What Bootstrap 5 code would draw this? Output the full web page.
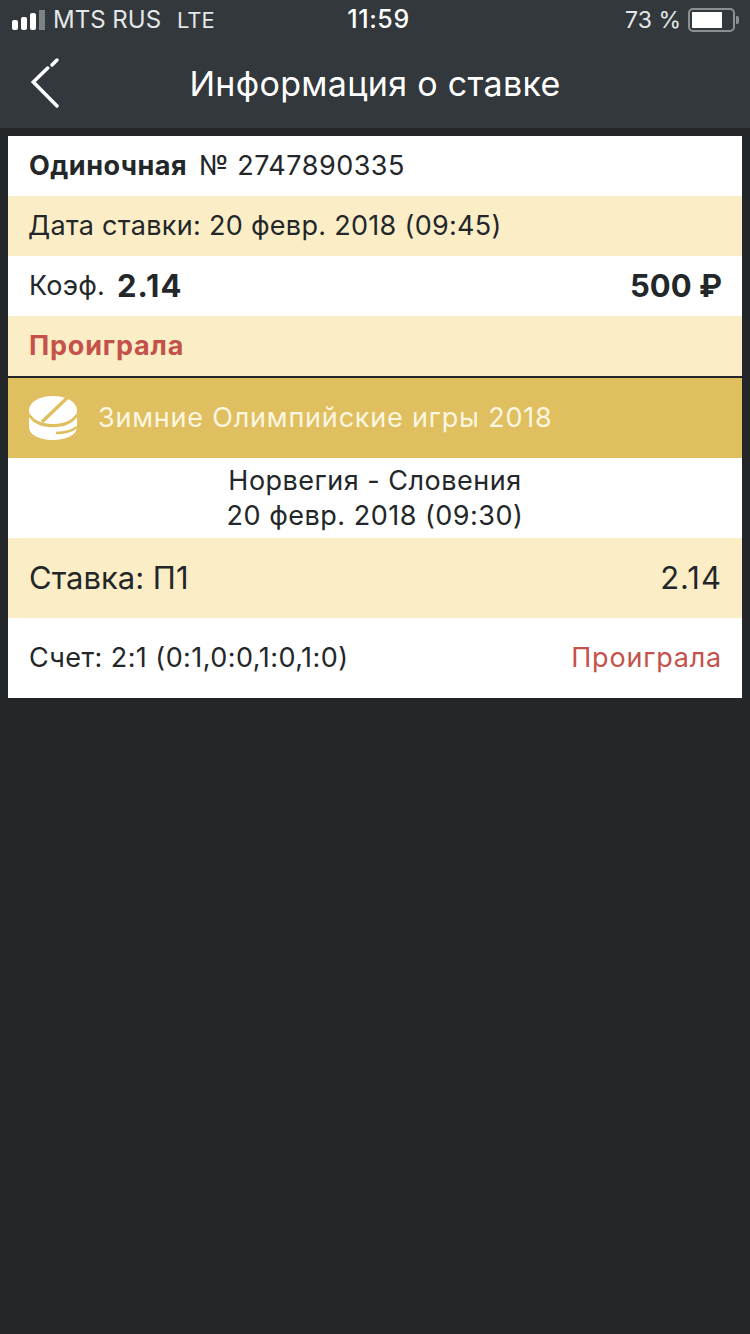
<!DOCTYPE html>
<html lang="ru">
  <head>
    <meta charset="UTF-8" />
    <meta name="viewport" content="width=device-width, initial-scale=1.0" />
    <title>Информация о ставке</title>
    <link
      href="https://cdn.jsdelivr.net/npm/bootstrap@5.3.0/dist/css/bootstrap.min.css"
      rel="stylesheet"
    />
    <style>
      body {
        background: #23272a;
        font-family: Inter, Roboto, "Liberation Sans", sans-serif;
        color: #23272a;
        min-height: 1334px;
      }
      .top-head {
        background: #32383c;
        height: 128px;
        color: #fff;
      }
      .status-line {
        height: 40px;
        padding: 0 11px 0 12px;
        font-size: 24px;
        color: #e4e6e7;
      }
      .status-side {
        flex: 1 1 0;
      }
      .status-time {
        color: #fff;
        font-size: 25px;
        font-weight: 500;
        letter-spacing: 0.6px;
        margin-left: 6px;
      }
      .lte-txt {
        font-size: 22px;
      }
      .batt-lbl {
        font-size: 23px;
        margin-right: 7px;
      }
      .sig-bars {
        gap: 3px;
      }
      .sig-bars span {
        width: 6px;
        background: #fff;
        border-radius: 2px;
      }
      .sig-bars .sig-off {
        background: #7d8285;
        border-radius: 0;
      }
      .batt-box {
        width: 47px;
        height: 24px;
        border: 2px solid #8b9093;
        border-radius: 5px;
        padding: 2px;
      }
      .batt-fill {
        width: 30px;
        background: #fff;
      }
      .batt-tip {
        width: 3px;
        height: 8px;
        margin-left: 1px;
        background: #8b9093;
        border-radius: 0 2px 2px 0;
      }
      .title-line {
        height: 88px;
      }
      .back-arrow {
        left: 30px;
        top: 16px;
      }
      .page-title {
        font-size: 34px;
        font-weight: 400;
        line-height: 1;
        letter-spacing: 0.3px;
        margin: 0;
      }
      .bet-card {
        margin: 8px;
        background: #fff;
      }
      .bet-row {
        height: 60px;
        padding: 1px 20px 0 21px;
        font-size: 27px;
        letter-spacing: 0.5px;
      }
      .date-row {
        letter-spacing: 0.3px;
        padding-left: 20px;
      }
      .row-cream {
        background: #fbeec6;
      }
      .lbl-strong {
        font-weight: 700;
      }
      .big-num {
        font-size: 31px;
        font-weight: 700;
        letter-spacing: 0;
      }
      .odds-num {
        letter-spacing: 1px;
      }
      .koef-lbl {
        letter-spacing: 0.2px;
      }
      .lost-txt {
        color: #c4524a;
        letter-spacing: 0.8px;
      }
      .sport-row {
        background: #dfbf5f;
        border-top: 2px solid #23272a;
        height: 82px;
        padding: 0 20px;
        color: #fdf6e0;
        font-size: 27px;
        letter-spacing: 0.8px;
      }
      .match-row {
        height: 80px;
        font-size: 27px;
        line-height: 35px;
        letter-spacing: 0.5px;
      }
      .stake-row {
        height: 80px;
        padding: 0 20px 0 21px;
        font-size: 31px;
      }
      .score-row {
        height: 80px;
        padding: 1px 20px 0 21px;
        font-size: 27px;
        letter-spacing: 0.45px;
      }
    </style>
  </head>
  <body class="m-0">
    <header class="top-head">
      <div class="status-line d-flex align-items-center">
        <div class="status-side d-flex align-items-center gap-2">
          <div class="sig-bars d-flex align-items-end">
            <span style="height: 10px"></span>
            <span style="height: 13px"></span>
            <span style="height: 17px"></span>
            <span class="sig-off" style="height: 20px"></span>
          </div>
          <span>MTS RUS</span>
          <span class="lte-txt ms-2">LTE</span>
        </div>
        <div class="status-time">11:59</div>
        <div class="status-side d-flex align-items-center justify-content-end">
          <span class="batt-lbl">73 %</span>
          <div class="batt-box d-flex"><div class="batt-fill"></div></div>
          <div class="batt-tip"></div>
        </div>
      </div>
      <div class="title-line position-relative d-flex align-items-center justify-content-center">
        <svg class="back-arrow position-absolute" width="32" height="52" viewBox="0 0 32 52" fill="none" stroke="#fff" stroke-width="3.5" stroke-linecap="round">
          <path d="M17.7 12 L3.3 26 L27 50" />
          <path d="M22 9 L27 4" />
        </svg>
        <h1 class="page-title">Информация о ставке</h1>
      </div>
    </header>

    <main class="bet-card">
      <div class="bet-row d-flex align-items-center gap-2">
        <span class="lbl-strong">Одиночная</span>
        <span class="ms-1">№ 2747890335</span>
      </div>
      <div class="bet-row date-row row-cream d-flex align-items-center">Дата ставки: 20 февр. 2018 (09:45)</div>
      <div class="bet-row d-flex align-items-center justify-content-between">
        <div class="d-flex align-items-center gap-2">
          <span class="koef-lbl">Коэф.</span>
          <span class="big-num odds-num ms-1">2.14</span>
        </div>
        <span class="big-num">500 ₽</span>
      </div>
      <div class="bet-row row-cream d-flex align-items-center lost-txt lbl-strong">Проиграла</div>
      <div class="sport-row d-flex align-items-center gap-3">
        <svg width="50" height="46" viewBox="0 0 50 46">
          <ellipse cx="25" cy="15" rx="24" ry="14" fill="#fff" />
          <path d="M1 18 V32 C1 40 12 45 25 45 C38 45 49 40 49 32 V18 C45 27 36 31 25 31 C14 31 5 27 1 18Z" fill="#fff" />
          <path d="M14 27 L41 1" stroke="#dfbf5f" stroke-width="3.5" />
          <path d="M1 20 C6 28 15 31 25 31 C35 31 44 28 49 20" fill="none" stroke="#dfbf5f" stroke-width="2.5" />
          <path d="M28 38 C36 38 44 36 49 32" fill="none" stroke="#dfbf5f" stroke-width="2.5" />
        </svg>
        <span class="ms-1">Зимние Олимпийские игры 2018</span>
      </div>
      <div class="match-row d-flex flex-column align-items-center justify-content-center">
        <div>Норвегия - Словения</div>
        <div>20 февр. 2018 (09:30)</div>
      </div>
      <div class="stake-row row-cream d-flex align-items-center justify-content-between">
        <span>Ставка: П1</span>
        <span class="odds-num">2.14</span>
      </div>
      <div class="score-row d-flex align-items-center justify-content-between">
        <span>Счет: 2:1 (0:1,0:0,1:0,1:0)</span>
        <span class="lost-txt">Проиграла</span>
      </div>
    </main>

    <script src="https://cdn.jsdelivr.net/npm/bootstrap@5.3.0/dist/js/bootstrap.bundle.min.js"></script>
  </body>
</html>
